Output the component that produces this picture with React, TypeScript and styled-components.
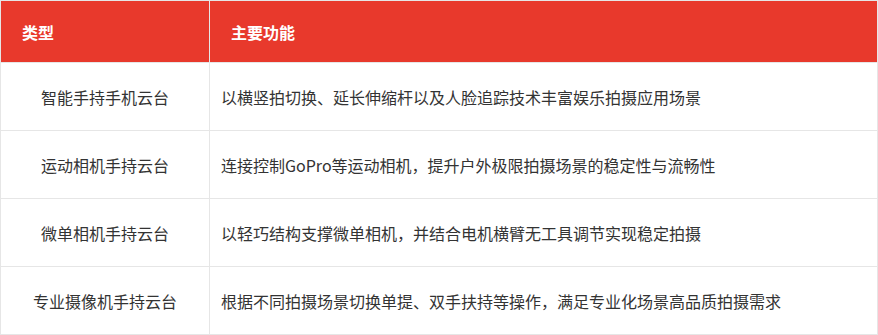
import React from "react"
import styled, { createGlobalStyle } from "styled-components"

const GlobalStyle = createGlobalStyle`
  body {
    margin: 0;
    background: #fff;
    font-family: "Noto Sans CJK SC", "Noto Sans", sans-serif;
  }
`

const Grid = styled.div`
  display: grid;
  grid-template-columns: 208px 1fr;
  gap: 1px;
  width: 878px;
  box-sizing: border-box;
  padding: 1px;
  background: #e6e6e6;
`

const HeadCell = styled.div`
  height: 61px;
  display: flex;
  align-items: center;
  padding-left: ${(p: { pad: number }) => p.pad}px;
  background: #e8392c;
  color: #fff;
  font-size: 16px;
  font-weight: 700;
`

const TypeCell = styled.div`
  height: 67px;
  display: flex;
  align-items: center;
  justify-content: center;
  background: #fff;
  color: #333;
  font-size: 16px;
`

const DescCell = styled.div`
  height: 67px;
  display: flex;
  align-items: center;
  padding-left: 11px;
  background: #fff;
  color: #333;
  font-size: 16px;
`

const rows = [
  ["智能手持手机云台", "以横竖拍切换、延长伸缩杆以及人脸追踪技术丰富娱乐拍摄应用场景"],
  ["运动相机手持云台", "连接控制GoPro等运动相机，提升户外极限拍摄场景的稳定性与流畅性"],
  ["微单相机手持云台", "以轻巧结构支撑微单相机，并结合电机横臂无工具调节实现稳定拍摄"],
  ["专业摄像机手持云台", "根据不同拍摄场景切换单提、双手扶持等操作，满足专业化场景高品质拍摄需求"],
]

export default function App() {
  return (
    <>
      <GlobalStyle />
      <Grid>
        <HeadCell pad={21}>类型</HeadCell>
        <HeadCell pad={21}>主要功能</HeadCell>
        {rows.map(([t, d]) => (
          <React.Fragment key={t}>
            <TypeCell>{t}</TypeCell>
            <DescCell>{d}</DescCell>
          </React.Fragment>
        ))}
      </Grid>
    </>
  )
}
